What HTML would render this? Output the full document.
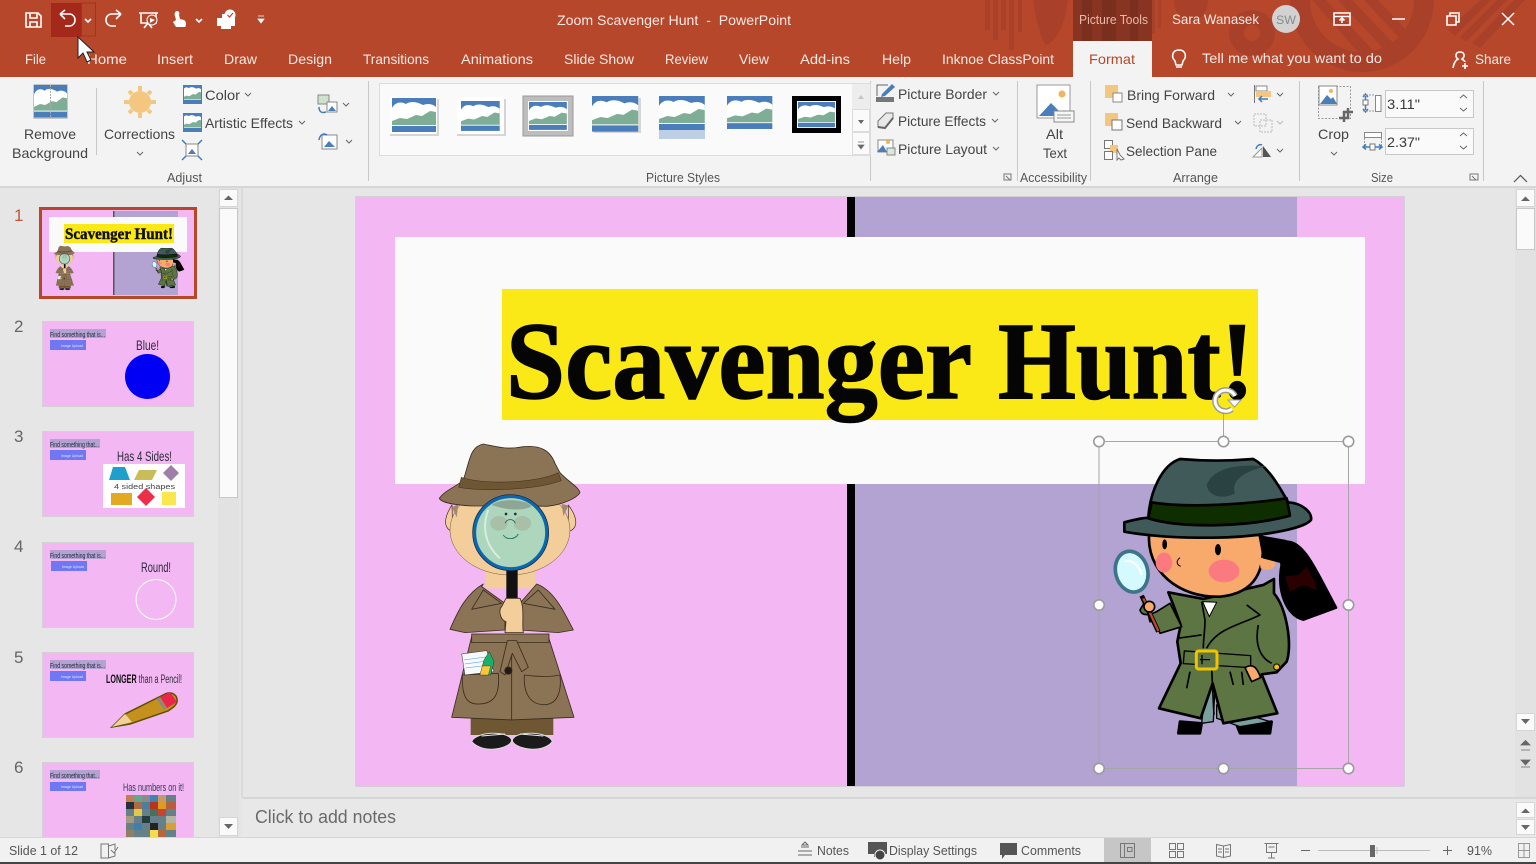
<!DOCTYPE html>
<html><head><meta charset="utf-8"><title>Zoom Scavenger Hunt - PowerPoint</title>
<style>
html,body{margin:0;padding:0;background:#e6e6e6;overflow:hidden}
svg{display:block}
text{font-family:"Liberation Sans",sans-serif;font-size:14px;fill:#444}
.w{fill:#f6e9e4}
.s{font-size:12.5px;fill:#555}
.n{font-size:17px;fill:#666}
.st{font-size:12.5px;fill:#555}
.c{font-size:7.5px;fill:#2a2a3a}
.ic{fill:none;stroke:#fff;stroke-width:1.6}
.chev{fill:none;stroke:#666;stroke-width:1}
.up{font-size:4px;fill:#dfe3ff}
.hd{font-size:14px;fill:#2c2c3a}
</style></head><body>
<svg width="1536" height="864" viewBox="0 0 1536 864" xmlns="http://www.w3.org/2000/svg">
<defs>
<g id="pic"><rect width="44" height="34" fill="#fff"/><rect width="44" height="13" fill="#4a7ebb"/><path d="M0,22V10C4,3 10,4 14,6C20,2 27,5 31,7C36,5 41,6 44,9V22Z" fill="#fff"/><path d="M0,27V23L8,20L15,21L24,17L30,18L38,13L44,14V27Z" fill="#7fae97"/><rect y="28" width="44" height="6" fill="#4a7ebb"/></g>
<g id="chevd"><path class="chev" d="M0,0L3,3L6,0"/></g>
<g id="handle"><circle r="5.2" fill="#fff" stroke="#9a9a9a" stroke-width="1.6"/></g>
<g id="det" stroke="#3a2c1d" stroke-width="2.5" stroke-linejoin="round">
<path d="M152,865H400V915H152Z" fill="#6f5733" stroke="none"/>
<path d="M155,935C165,905 265,900 275,930C275,955 190,975 155,935Z" fill="#1b1b1b" stroke="#ddd" stroke-width="3"/>
<path d="M397,935C390,905 285,900 277,930C277,955 365,975 397,935Z" fill="#1b1b1b" stroke="#ddd" stroke-width="3"/>
<path d="M185,918L255,912M300,912L370,918" stroke="#eee" stroke-width="3" fill="none"/>
<path d="M155,620L95,862L275,870L462,862L385,620Z" fill="#8b7355"/>
<path d="M275,660V870" fill="none"/>
<path d="M127,735C125,800 140,825 180,822C225,820 240,790 235,730Z" fill="#8b7355"/>
<path d="M313,735C310,790 330,825 375,824C415,822 425,780 420,735C390,742 345,740 313,735Z" fill="#8b7355"/>
<path d="M198,425H345V475H198Z" fill="#f3ce9b" stroke="none"/>
<path d="M190,462C140,490 115,540 90,598L135,608L255,600V520L185,470ZM350,462C400,480 430,540 460,600L415,608L300,600V520Z" fill="#8b7355"/>
<path d="M155,538L245,520L190,480ZM405,538L310,520L355,480Z" fill="#8b7355"/>
<rect x="155" y="612" width="232" height="26" fill="#8b7355"/>
<path d="M262,632L290,632L325,712L305,725L277,670L255,735L240,725Z" fill="#8b7355"/>
<circle cx="265" cy="722" r="11" fill="#1b1b1b"/>
<path d="M125,672L200,662L222,725L135,735Z" fill="#f6f9fd" stroke-width="1.5"/>
<path d="M132,690L205,680M135,702L208,692M137,714L212,705" stroke="#6fa8dc" stroke-width="2"/>
<path d="M192,690L208,665L222,695L212,735H180Z" fill="#17b26a" stroke-width="1.5"/>
<path d="M187,708H212L205,735H180Z" fill="#f6c83a" stroke-width="1"/>
<path d="M96,225C70,265 70,295 98,305ZM445,225C475,265 475,295 445,305Z" fill="#f3ce9b" stroke-width="2"/>
<ellipse cx="270" cy="300" rx="180" ry="135" fill="#f3ce9b" stroke="#6e5634" stroke-width="1.5"/>
<path d="M96,232L115,222L110,262ZM446,226L425,222L430,258Z" fill="#a08a67" stroke="none"/>
<path d="M58,205C75,180 110,170 130,150C150,90 150,50 190,42C230,50 260,60 310,50C360,45 390,60 405,100L420,128C445,155 475,170 480,188C470,205 425,225 380,229C300,226 220,228 155,228C110,225 65,220 58,205Z" fill="#8b7355"/>
<path d="M124,142C190,165 350,160 415,128L424,152C350,180 190,186 116,172Z" fill="#6e5634" stroke-width="1.500"/>
<rect x="259" y="415" width="34" height="90" fill="#111" stroke="none"/>
<circle cx="272" cy="308" r="109" fill="#aed6bc" stroke="#0b68ae" stroke-width="11"/>
<circle cx="272" cy="308" r="114" fill="none" stroke="#1a2433" stroke-width="2"/>
<path d="M215,225C270,245 320,240 335,228C310,205 240,205 215,225Z" fill="#8ea794" stroke="none"/>
<path d="M205,240C185,290 195,345 240,385" fill="none" stroke="#d5ede3" stroke-width="6"/>
<ellipse cx="237" cy="280" rx="26" ry="22" fill="#a9bfa7" stroke="none"/><ellipse cx="307" cy="280" rx="26" ry="22" fill="#a9bfa7" stroke="none"/>
<path d="M250,315C258,330 285,330 295,312M255,280C262,265 280,265 286,280" fill="none" stroke="#1f6a5a"/>
<circle cx="258" cy="252" r="4" fill="#1f3038" stroke="none"/><circle cx="286" cy="252" r="4" fill="#1f3038" stroke="none"/>
<path d="M258,505L300,505C315,535 305,580 310,608H255L258,575C240,570 235,540 245,530Z" fill="#f3ce9b"/>
</g>
<g id="girl" stroke="#000" stroke-width="8" stroke-linejoin="round">
<path d="M270,1010L265,1045H330L335,1015ZM440,1020L450,1045H540L545,1010Z" fill="#000"/>
<path d="M345,920L335,1015L370,1010L375,900ZM380,1000L450,1025L540,1010L380,960Z" fill="#7ba0a0" stroke-width="4"/>
<path d="M590,470C640,470 670,540 738,668L640,704C590,690 560,620 575,540C570,510 575,480 590,470Z" fill="#000"/>
<path d="M585,575L625,570L650,545L675,590L680,615L640,600L600,620Z" fill="#2a0000" stroke="none"/>
<path d="M235,622L340,642L520,600L552,582L552,625C590,670 608,780 590,830L560,862L515,868L562,985L400,1015L368,895L332,1000L207,970L272,835L262,770L272,720L250,660Z" fill="#5c7543"/>
<path d="M345,705L335,650M345,705C345,740 340,760 340,790M350,790C380,730 450,720 510,690L470,660M262,760L335,750M365,850L372,990M505,720C495,770 505,815 545,835M300,860L290,910M420,860L430,900M455,860L460,900" fill="none" stroke-width="5"/>
<path d="M338,650L380,652L358,695Z" fill="#fff" stroke-width="3"/>
<path d="M283,798L482,812V848L280,836Z" fill="#5c7543" stroke-width="4"/>
<rect x="319" y="798" width="62" height="54" rx="7" fill="#5c7543" stroke="#f3c300" stroke-width="9"/>
<path d="M336,810V838M330,824H360" stroke-width="4" fill="none"/>
<path d="M465,848C495,830 505,860 512,878L485,890Z" fill="#f8a96c" stroke-width="5"/>
<circle cx="560" cy="846" r="9" fill="#f3c300" stroke-width="3"/>
<path d="M178,440C165,560 270,640 390,635C500,625 530,550 515,450Z" fill="#f8a96c"/>
<path d="M508,525C525,505 560,515 555,540C545,560 525,555 512,550Z" fill="#f8a96c" stroke="none"/>
<path d="M505,450L590,465L575,535L518,520Z" fill="#000" stroke="none"/>
<ellipse cx="402" cy="558" rx="46" ry="34" fill="#fb7a80" stroke="none"/>
<ellipse cx="222" cy="533" rx="25" ry="30" fill="#fb7a80" stroke="none"/>
<ellipse cx="224" cy="478" rx="7" ry="15" fill="#000" stroke="none"/><ellipse cx="384" cy="494" rx="9" ry="17" fill="#000" stroke="none"/>
<path d="M270,518C255,530 262,540 272,544" fill="none" stroke-width="3"/>
<path d="M103,412C130,405 150,400 175,398C180,320 215,240 270,222C340,228 420,228 490,222C540,250 570,310 595,352C640,355 668,385 663,405C640,435 480,460 350,458C230,460 130,445 103,440Z" fill="#3f5a58"/>
<path d="M185,352C290,370 470,358 590,340L600,392C480,425 280,432 175,400Z" fill="#0f2e00"/>
<path d="M350,300C370,250 440,235 530,245C470,255 420,285 435,325C400,345 355,335 350,300Z" fill="#2b4243" stroke="none"/>
<path d="M165,650L150,675C155,695 180,690 200,680L240,655L275,725L210,745L195,710L180,710Z" fill="#5c7543" stroke-width="5"/>
<path d="M155,632L205,740" stroke="#000" stroke-width="14"/><path d="M160,640L205,738" stroke="#b94a2c" stroke-width="7"/>
<circle cx="178" cy="665" r="16" fill="#f8a96c" stroke-width="5"/>
<ellipse cx="125" cy="560" rx="48" ry="62" transform="rotate(-15 125 560)" fill="#d4faff" stroke="#3d7488" stroke-width="11"/>
<path d="M105,530C125,520 150,545 155,570" fill="none" stroke="#fff" stroke-width="6"/>
</g>
<clipPath id="t"><rect x="42" y="762" width="152" height="75"/></clipPath>
<clipPath id="tb"><rect width="1536" height="77"/></clipPath>
</defs>

<!-- base -->
<rect width="1536" height="864" fill="#e6e6e6"/>
<!-- title bar -->
<rect width="1536" height="77" fill="#b7472a"/>
<g fill="#a9412a" clip-path="url(#tb)">
<rect x="985" y="0" width="5" height="30"/><rect x="993" y="0" width="5" height="40"/><rect x="1001" y="0" width="5" height="30"/><rect x="1009" y="0" width="5" height="50"/><rect x="1018" y="0" width="4" height="32"/>
<path d="M1033,0H1068C1064,35 1050,45 1045,45C1038,30 1035,15 1033,0Z"/>
<rect x="1152" y="0" width="3" height="34"/><rect x="1158" y="0" width="3" height="28"/>
<path d="M1174,0H1208A16,20 0 0,1 1174,0Z"/>
<path fill-rule="evenodd" d="M1252,10A23,23 0 1,1 1251.900,10ZM1252,25A8,8 0 1,0 1252.100,25Z"/>
<circle cx="1362" cy="0" r="62" fill="none" stroke="#a9412a" stroke-width="20"/>
<path d="M1312,0H1326L1384,62L1374,70ZM1338,0H1352L1400,50L1392,58ZM1364,0H1378L1412,36L1405,44Z"/>
<path d="M1448,30L1480,0H1491L1455,36ZM1460,37L1497,0H1507L1466,42ZM1472,43L1514,0H1525L1480,48Z"/>
</g>
<path d="M1073,0H1152V41H1073Z" fill="#873522"/>
<g fill="#7a2e1d"><rect x="1082" y="0" width="10" height="41"/><rect x="1102" y="0" width="14" height="41"/><rect x="1130" y="0" width="8" height="41"/></g>
<rect x="1073" y="41" width="79" height="36" fill="#f3f3f3"/>
<!-- QAT -->
<g>
<path class="ic" d="M26,13H38L41,16V27H26ZM30,13V18H37V13M30,27V22H37V27" stroke-width="1.5"/>
<rect x="51" y="3" width="30" height="34" fill="#a5291b"/><rect x="81.500" y="3" width="14" height="33" fill="none" stroke="#a0351f"/>
<path class="ic" d="M60,14L65,10M60,14L65,19M60,14H69C77,14 77,26 69,26H65" stroke-width="2"/>
<path class="ic" d="M85,19L88,22L91,19" stroke-width="1"/>
<path class="ic" d="M121,14L116,10M121,14L116,19M121,14H112C104,14 104,26 112,26H116" stroke-width="2"/>
<path class="ic" d="M139,13H158M141,13V23H156V13M148,23L144,28M148,23L152,28" stroke-width="1.2"/><circle cx="152" cy="20" r="5" fill="#b7472a" stroke="#fff"/><path d="M150,18L155,20L150,23Z" fill="#fff"/>
<path d="M177,11C175,11 174,14 175,16L176,20L173,22L176,27H185C187,25 186,21 184,20L180,19L179,15C180,13 179,11 177,11Z" fill="#fff"/>
<path class="ic" d="M196,19L199,22L202,19" stroke-width="1"/>
<path d="M217,18H235V26H231V29H221V26H217Z" fill="#fff"/><rect x="222" y="14" width="9" height="4" fill="#fff"/><circle cx="230" cy="15" r="5.500" fill="#fff"/><path d="M227.500,15L229.500,17L233,13" stroke="#b7472a" stroke-width="1.2" fill="none"/>
<path d="M258,16H264M258,19H264L261,23Z" fill="#fff" stroke="#fff" stroke-width=".8"/>
</g>
<text class="w" x="557" y="25" textLength="234" lengthAdjust="spacingAndGlyphs">Zoom Scavenger Hunt&#160;&#160;-&#160;&#160;PowerPoint</text>
<text x="1079" y="24" textLength="69" lengthAdjust="spacingAndGlyphs" style="font-size:12.500px;fill:#e8b9a8">Picture Tools</text>
<text class="w" x="1172" y="24" textLength="87" lengthAdjust="spacingAndGlyphs">Sara Wanasek</text>
<circle cx="1286" cy="19" r="14" fill="#d2d2d2"/>
<text x="1276" y="24" textLength="20" lengthAdjust="spacingAndGlyphs" style="font-size:12px;fill:#8a8a8a">SW</text>
<path class="ic" d="M1334,13H1350V25H1334Z M1334,16.500H1350 M1342,23V18M1339.500,20.500L1342,18L1344.500,20.500" stroke-width="1.3"/>
<path d="M1392,19H1405" stroke="#fff" stroke-width="1.500"/>
<path class="ic" d="M1447,16H1456V25H1447ZM1450,16V13H1459V22H1456" stroke-width="1.300"/>
<path d="M1502,13L1514,25M1514,13L1502,25" stroke="#fff" stroke-width="1.500"/>
<!-- tabs -->
<g class="tabs">
<text class="w" x="25" y="64" textLength="21" lengthAdjust="spacingAndGlyphs">File</text>
<text class="w" x="87" y="64" textLength="40" lengthAdjust="spacingAndGlyphs">Home</text>
<text class="w" x="157" y="64" textLength="36" lengthAdjust="spacingAndGlyphs">Insert</text>
<text class="w" x="224" y="64" textLength="33" lengthAdjust="spacingAndGlyphs">Draw</text>
<text class="w" x="288" y="64" textLength="44" lengthAdjust="spacingAndGlyphs">Design</text>
<text class="w" x="363" y="64" textLength="66" lengthAdjust="spacingAndGlyphs">Transitions</text>
<text class="w" x="461" y="64" textLength="72" lengthAdjust="spacingAndGlyphs">Animations</text>
<text class="w" x="564" y="64" textLength="70" lengthAdjust="spacingAndGlyphs">Slide Show</text>
<text class="w" x="665" y="64" textLength="43" lengthAdjust="spacingAndGlyphs">Review</text>
<text class="w" x="739" y="64" textLength="30" lengthAdjust="spacingAndGlyphs">View</text>
<text class="w" x="800" y="64" textLength="50" lengthAdjust="spacingAndGlyphs">Add-ins</text>
<text class="w" x="882" y="64" textLength="29" lengthAdjust="spacingAndGlyphs">Help</text>
<text class="w" x="942" y="64" textLength="112" lengthAdjust="spacingAndGlyphs">Inknoe ClassPoint</text>
<text x="1089" y="64" textLength="46" lengthAdjust="spacingAndGlyphs" style="fill:#b7472a">Format</text>
<text class="w" x="1202" y="63" textLength="180" lengthAdjust="spacingAndGlyphs">Tell me what you want to do</text>
<text class="w" x="1475" y="64" textLength="36" lengthAdjust="spacingAndGlyphs">Share</text>
</g>
<path class="ic" d="M1175,61C1171,57 1172,50 1179,50C1186,50 1187,57 1183,61L1182,65H1176ZM1176,67H1182" stroke-width="1.200"/>
<path class="ic" d="M1453,68C1454,62 1456,60 1458,59C1455,57 1455,52 1460,52C1465,52 1465,57 1462,59C1463,60 1465,61 1465,62M1462,66H1468M1465,63V69" stroke-width="1.100"/>

<!-- ribbon -->
<rect y="77" width="1536" height="109" fill="#f3f3f3"/>
<rect y="186" width="1536" height="2" fill="#d6d6d6"/>
<g stroke="#c8c8c8"><path d="M96.500,88V155M368.500,81V181M1017.500,81V181M1090.500,81V181M1299.500,81V181M1483.500,81V181M870.500,81V181" fill="none"/></g>
<!-- remove bg -->
<g transform="translate(34,85)"><rect width="33" height="33" fill="#fff" stroke="#999"/><use href="#pic" transform="scale(.75,.95)"/><path d="M16.500,0V33" stroke="#aaa" stroke-dasharray="2 1"/></g>
<text x="24" y="139" textLength="52" lengthAdjust="spacingAndGlyphs">Remove</text>
<text x="12" y="158" textLength="76" lengthAdjust="spacingAndGlyphs">Background</text>
<!-- corrections -->
<circle cx="140" cy="102" r="11" fill="#f3c77f"/>
<g stroke="#f3c77f" stroke-width="4"><path d="M140,86V91M140,113V118M124,102H129M151,102H156M129,91L132,94M148,110L151,113M151,91L148,94M132,110L129,113"/></g>
<text x="104" y="139" textLength="71" lengthAdjust="spacingAndGlyphs">Corrections</text>
<use href="#chevd" x="137" y="152"/>
<use href="#pic" transform="translate(183,85) scale(.42,.53)"/><rect x="183.500" y="85.500" width="18" height="18" fill="none" stroke="#4a7ebb"/>
<text x="205" y="100" textLength="35" lengthAdjust="spacingAndGlyphs">Color</text><use href="#chevd" x="245" y="93"/>
<use href="#pic" transform="translate(183,113) scale(.42,.53)"/><rect x="183.500" y="113.500" width="18" height="18" fill="none" stroke="#777"/>
<text x="205" y="128" textLength="88" lengthAdjust="spacingAndGlyphs">Artistic Effects</text><use href="#chevd" x="299" y="121"/>
<g transform="translate(182,140)"><rect x="4" y="4" width="12" height="12" fill="#fff" stroke="#888"/><path d="M6,14L10,9L14,14Z" fill="#4a7ebb"/><path d="M0,0L4,4M20,0L16,4M0,20L4,16M20,20L16,16" stroke="#3d7cc0" stroke-width="1.500"/></g>
<g transform="translate(318,95)"><rect width="11" height="9" fill="#cfe0cf" stroke="#888"/><rect x="9" y="7" width="10" height="10" fill="#fff" stroke="#888"/><path d="M10,16L14,11L18,16Z" fill="#4a7ebb"/><path d="M1,12C1,18 5,18 8,17" fill="none" stroke="#3d7cc0" stroke-width="1.500"/></g>
<use href="#chevd" x="343" y="103"/>
<g transform="translate(318,132)"><rect x="4" y="3" width="15" height="14" fill="#fff" stroke="#888"/><path d="M6,15L11,9L17,15Z" fill="#4a7ebb"/><path d="M1,8C2,2 6,1 9,3" fill="none" stroke="#3d7cc0" stroke-width="1.500"/></g>
<use href="#chevd" x="346" y="140"/>
<text class="s" x="167" y="182" textLength="35" lengthAdjust="spacingAndGlyphs">Adjust</text>

<!-- gallery -->
<rect x="379.500" y="83.500" width="491" height="72" fill="#fafafa" stroke="#dcdcdc"/>
<g fill="#000" opacity=".14"><rect x="390" y="99" width="49" height="37"/><rect x="457" y="99" width="49" height="37"/><rect x="594" y="98" width="47" height="35"/></g>
<rect x="390" y="97" width="47" height="37" fill="#fff"/><use href="#pic" transform="translate(392,98)"/>
<rect x="457" y="97" width="47" height="37" fill="#fff"/><use href="#pic" transform="translate(461,101) scale(.88)"/>
<rect x="523" y="96" width="50" height="40" fill="#bdbdbd" stroke="#999"/><rect x="528" y="101" width="40" height="30" fill="#fff"/><use href="#pic" transform="translate(529,102) scale(.86,.82)"/>
<use href="#pic" transform="translate(592,96) scale(1.05)"/>
<use href="#pic" transform="translate(659,96) scale(1.04,1)"/><rect x="659" y="130" width="46" height="9" fill="#4a7ebb" opacity=".35"/>
<use href="#pic" transform="translate(727,96) scale(1.03,.97)"/>
<rect x="792" y="96" width="49" height="37" fill="#000"/><rect x="797" y="101" width="39" height="27" fill="#fff"/><use href="#pic" transform="translate(798,102) scale(.84,.74)"/>
<rect x="852" y="84" width="18" height="25" fill="#ededed"/><rect x="852.500" y="109.500" width="17" height="22" fill="#fafafa" stroke="#dcdcdc"/><rect x="852.500" y="132.500" width="17" height="22" fill="#fafafa" stroke="#dcdcdc"/>
<path d="M858,99L861,95L864,99Z" fill="#c6c6c6"/><path d="M858,120H864L861,124Z" fill="#666"/><path d="M858,142H864M858,145H864L861,149Z" stroke="#777" fill="#666" stroke-width=".8"/>
<text class="s" x="646" y="182" textLength="74" lengthAdjust="spacingAndGlyphs">Picture Styles</text>
<g fill="none" stroke="#777"><path d="M1004,180V174H1011V180ZM1006,176L1010,180"/><path d="M1470,180V174H1478V180ZM1472,176L1476,180"/></g>
<!-- picture border etc -->
<g><rect x="876" y="97" width="18" height="5" fill="#777"/><path d="M877,96V85H888" fill="none" stroke="#666"/><path d="M882,94L892,84L895,87L885,96L881,97Z" fill="#4a7ebb"/></g>
<text x="898" y="99" textLength="89" lengthAdjust="spacingAndGlyphs">Picture Border</text><use href="#chevd" x="993" y="92"/>
<path d="M878,121L886,113H893V118L885,128L878,127Z" fill="#e8e8e8" stroke="#777"/><path d="M878,127L885,128L893,118" stroke="#666" stroke-width="2" fill="none"/>
<text x="898" y="126" textLength="88" lengthAdjust="spacingAndGlyphs">Picture Effects</text><use href="#chevd" x="992" y="119"/>
<g transform="translate(876,138)"><rect x="2" y="2" width="15" height="12" fill="#fff" stroke="#888"/><path d="M1,14L7,7L11,14Z" fill="#4a7ebb"/><rect x="11" y="10" width="8" height="7" fill="#d9e7dc" stroke="#888"/><circle cx="12" cy="4" r="2" fill="#f2b45c"/></g>
<text x="898" y="154" textLength="89" lengthAdjust="spacingAndGlyphs">Picture Layout</text><use href="#chevd" x="993" y="147"/>
<!-- alt -->
<g transform="translate(1037,85)"><rect width="33" height="33" fill="#fff" stroke="#999"/><path d="M2,31L14,18L24,28L27,25L32,31Z" fill="#4a7ebb"/><circle cx="25" cy="9" r="3.500" fill="#f2b45c"/><rect x="17" y="26" width="20" height="11" fill="#f7f7f7" stroke="#888"/><path d="M20,30H34M20,33H34" stroke="#999"/></g>
<text x="1046" y="139" textLength="17" lengthAdjust="spacingAndGlyphs">Alt</text>
<text x="1043" y="158" textLength="24" lengthAdjust="spacingAndGlyphs">Text</text>
<text class="s" x="1020" y="182" textLength="67" lengthAdjust="spacingAndGlyphs">Accessibility</text>
<!-- arrange -->
<rect x="1105" y="85" width="13" height="13" fill="#f3c77f"/><rect x="1113" y="93" width="9" height="9" fill="#fff" stroke="#888"/>
<text x="1127" y="100" textLength="88" lengthAdjust="spacingAndGlyphs">Bring Forward</text><use href="#chevd" x="1228" y="93"/>
<rect x="1105" y="113" width="13" height="13" fill="#f3c77f"/><rect x="1112" y="120" width="10" height="10" fill="#fff" stroke="#777"/>
<text x="1126" y="128" textLength="96" lengthAdjust="spacingAndGlyphs">Send Backward</text><use href="#chevd" x="1235" y="121"/>
<g transform="translate(1104,140)"><rect x=".5" y=".5" width="8" height="8" fill="#fff" stroke="#777"/><rect x="6" y="5" width="8" height="8" fill="#f3c77f"/><rect x=".5" y="11.500" width="8" height="8" fill="#fff" stroke="#777"/><path d="M13,9V20L15,18L17,20L20,19L16,15Z" fill="#fff" stroke="#777"/></g>
<text x="1126" y="156" textLength="91" lengthAdjust="spacingAndGlyphs">Selection Pane</text>
<g transform="translate(1254,85)"><path d="M.5,0V18" stroke="#777"/><rect x="2" y="1" width="11" height="5" fill="#fff" stroke="#888"/><rect x="2" y="6" width="15" height="6" fill="#f3c77f"/><path d="M14,14H5M8,11L5,14L8,17" stroke="#3d7cc0" stroke-width="1.500" fill="none"/></g>
<use href="#chevd" x="1277" y="93"/>
<g transform="translate(1253,113)" stroke="#bbb" fill="none"><rect x="1" y="1" width="12" height="12" stroke-dasharray="2 1"/><rect x="7" y="7" width="12" height="12" stroke-dasharray="2 1"/></g>
<use href="#chevd" x="1277" y="121" opacity=".4"/>
<g transform="translate(1252,142)"><path d="M1,15L10,6V15Z" fill="#fff" stroke="#999"/><path d="M11,4L19,15H11Z" fill="#555"/><path d="M4,7C5,3 8,2 10,3" stroke="#3d7cc0" fill="none" stroke-width="1.500"/></g>
<use href="#chevd" x="1277" y="149"/>
<text class="s" x="1173" y="182" textLength="45" lengthAdjust="spacingAndGlyphs">Arrange</text>
<!-- size -->
<rect x="1318.500" y="86.500" width="32" height="32" fill="none" stroke="#999" stroke-dasharray="2 1.500"/>
<rect x="1319" y="86" width="18" height="19" fill="#fff" stroke="#888"/><path d="M1320,104L1327,95L1331,99L1333,97L1337,104Z" fill="#4a7ebb"/><circle cx="1331" cy="91" r="2" fill="#f2b45c"/>
<path d="M1348,108V118H1339M1344,122V112H1353" fill="none" stroke="#666" stroke-width="2.500"/>
<text x="1318" y="139" textLength="31" lengthAdjust="spacingAndGlyphs">Crop</text><use href="#chevd" x="1331" y="152"/>
<g><rect x="1375.500" y="95.500" width="5.500" height="16" fill="#fff" stroke="#888"/><path d="M1365.500,96V110" stroke="#3d7cc0" stroke-width="1.500"/><path d="M1363,97L1365.500,94L1368,97M1363,109L1365.500,112L1368,109" fill="none" stroke="#3d7cc0" stroke-width="1.500"/><rect x="1363" y="100" width="5" height="5" fill="#fff" stroke="#777"/><path d="M1363,95H1375M1363,111H1375" stroke="#999" stroke-dasharray="2 1"/></g>
<g><rect x="1364.500" y="132.500" width="17" height="5" fill="#fff" stroke="#888"/><path d="M1364.500,138V146M1381.500,138V146" stroke="#999" stroke-dasharray="2 1"/><path d="M1364,147H1381" stroke="#3d7cc0" stroke-width="1.500"/><path d="M1366,144.500L1363,147L1366,149.500M1379,144.500L1382,147L1379,149.500" fill="none" stroke="#3d7cc0" stroke-width="1.500"/><rect x="1370" y="144" width="5" height="6" fill="#fff" stroke="#777"/></g>
<rect x="1385.500" y="90.500" width="88" height="27" fill="#fafafa" stroke="#c8c8c8"/>
<rect x="1385.500" y="128.500" width="88" height="26" fill="#fafafa" stroke="#c8c8c8"/>
<text x="1387" y="109" textLength="33" lengthAdjust="spacingAndGlyphs" style="fill:#3a3a3a">3.11"</text>
<text x="1387" y="147" textLength="33" lengthAdjust="spacingAndGlyphs" style="fill:#3a3a3a">2.37"</text>
<path class="chev" d="M1460,98L1463.500,95L1467,98M1460,108L1463.500,111L1467,108M1460,136L1463.500,133L1467,136M1460,146L1463.500,149L1467,146"/>
<text class="s" x="1371" y="182" textLength="22" lengthAdjust="spacingAndGlyphs">Size</text>
<path d="M1514,182L1520.500,175.500L1527,182" fill="none" stroke="#555" stroke-width="1.200"/>

<!-- left pane -->
<rect x="0" y="188" width="243" height="650" fill="#e6e6e6"/>
<rect x="241" y="188" width="2" height="610" fill="#dadada"/>
<rect x="218" y="188" width="21" height="650" fill="#e2e2e2"/>
<rect x="219.500" y="189.500" width="18" height="17" fill="#fafafa" stroke="#d6d6d6"/>
<rect x="219.500" y="208.500" width="18" height="289" fill="#fafafa" stroke="#c8c8c8"/>
<rect x="219.500" y="817.500" width="18" height="18" fill="#fafafa" stroke="#d6d6d6"/>
<path d="M224,200H233L228.500,195.500Z" fill="#666"/><path d="M224,824H233L228.500,829Z" fill="#666"/>

<!-- thumb numbers -->
<text class="n" x="14" y="221" style="fill:#c0583a">1</text>
<text class="n" x="14" y="332">2</text>
<text class="n" x="14" y="442">3</text>
<text class="n" x="14" y="552">4</text>
<text class="n" x="14" y="663">5</text>
<text class="n" x="14" y="773">6</text>
<!-- thumb 1 -->
<rect x="39" y="207" width="158" height="92" fill="#b7472a"/>
<rect x="42" y="210" width="152" height="86" fill="#f3b8f3"/>
<rect x="114" y="211" width="64" height="84" fill="#b2a3d3"/>
<rect x="113" y="211" width="1.500" height="84" fill="#555"/>
<rect x="49" y="217" width="138" height="35" fill="#fafafa"/>
<rect x="64" y="224" width="110" height="19" fill="#fbe817"/>
<text x="65" y="239" textLength="108" lengthAdjust="spacingAndGlyphs" style="font-family:'Liberation Serif',serif;font-weight:bold;font-size:16px;fill:#111;stroke:#111;stroke-width:.4">Scavenger Hunt!</text>
<use href="#det" transform="translate(51.400,243.900) scale(.0483)"/>
<use href="#girl" transform="translate(148.400,237.400) scale(.0483)"/>
<!-- thumb 2 -->
<rect x="42.500" y="321.500" width="151" height="85" fill="#f3b8f3" stroke="#d4d0d4"/>
<rect x="50" y="329" width="56" height="9" fill="#b2a3d3"/><text class="c" x="50" y="337" textLength="55" lengthAdjust="spacingAndGlyphs">Find something that is...</text>
<rect x="50" y="340" width="36" height="10" fill="#6f78f2"/><text class="up" x="61" y="347" textLength="22" lengthAdjust="spacingAndGlyphs">Image Upload</text>
<text class="hd" x="136" y="350" textLength="23" lengthAdjust="spacingAndGlyphs">Blue!</text>
<circle cx="147.500" cy="376.500" r="22.500" fill="#0000f5"/>
<!-- thumb 3 -->
<rect x="42.500" y="431.500" width="151" height="85" fill="#f3b8f3" stroke="#d4d0d4"/>
<rect x="50" y="439" width="50" height="9" fill="#b2a3d3"/><text class="c" x="50" y="447" textLength="49" lengthAdjust="spacingAndGlyphs">Find something that...</text>
<rect x="50" y="450" width="36" height="10" fill="#6f78f2"/><text class="up" x="61" y="457" textLength="22" lengthAdjust="spacingAndGlyphs">Image Upload</text>
<text class="hd" x="117" y="461" textLength="55" lengthAdjust="spacingAndGlyphs">Has 4 Sides!</text>
<rect x="103" y="464" width="82" height="44" fill="#fff"/>
<path d="M113,467H125L130,480H109Z" fill="#1fa0cc"/><path d="M139,470H157L152,480H134Z" fill="#c8bd57"/><path d="M171,465L179,473L171,481L163,473Z" fill="#9f7ea8"/>
<text x="114" y="489" textLength="61" lengthAdjust="spacingAndGlyphs" style="font-size:7px;fill:#444">4 sided shapes</text>
<rect x="111" y="493" width="21" height="12" fill="#e2aa22"/><path d="M146,488L155,497L146,506L137,497Z" fill="#ee2f4a"/><rect x="162" y="492" width="14" height="13" fill="#fbe64e"/>
<!-- thumb 4 -->
<rect x="42.500" y="542.500" width="151" height="85" fill="#f3b8f3" stroke="#d4d0d4"/>
<rect x="50" y="550" width="56" height="9" fill="#b2a3d3"/><text class="c" x="50" y="558" textLength="55" lengthAdjust="spacingAndGlyphs">Find something that is...</text>
<rect x="51" y="561" width="36" height="10" fill="#6f78f2"/><text class="up" x="62" y="568" textLength="22" lengthAdjust="spacingAndGlyphs">Image Upload</text>
<text class="hd" x="141" y="572" textLength="30" lengthAdjust="spacingAndGlyphs">Round!</text>
<circle cx="156" cy="599.500" r="20" fill="none" stroke="#fff" stroke-width="1"/>
<!-- thumb 5 -->
<rect x="42.500" y="652.500" width="151" height="85" fill="#f3b8f3" stroke="#d4d0d4"/>
<rect x="50" y="660" width="56" height="9" fill="#b2a3d3"/><text class="c" x="50" y="668" textLength="55" lengthAdjust="spacingAndGlyphs">Find something that is...</text>
<rect x="50" y="671" width="36" height="10" fill="#6f78f2"/><text class="up" x="61" y="678" textLength="22" lengthAdjust="spacingAndGlyphs">Image Upload</text>
<text x="106" y="683" textLength="76" lengthAdjust="spacingAndGlyphs" style="font-size:11.500px;fill:#2c2c3a"><tspan font-weight="bold" fill="#111">LONGER</tspan> than a Pencil!</text>
<path d="M112,727L125,714L165,694C172,691 178,695 177,702C176,706 172,708 168,711L130,724Z" fill="#c6901c" stroke="#5c5000" stroke-width="1.500"/>
<path d="M112,727L125,714L132,722Z" fill="#f0d19b"/><path d="M160,697L167,708L177,702L170,692Z" fill="#e8254a"/><path d="M158,698L165,709" stroke="#888" stroke-width="3"/>
<!-- thumb 6 -->
<g clip-path="url(#t)">
<rect x="42.500" y="762.500" width="151" height="85" fill="#f3b8f3" stroke="#d4d0d4"/>
<rect x="50" y="770" width="50" height="9" fill="#b2a3d3"/><text class="c" x="50" y="778" textLength="49" lengthAdjust="spacingAndGlyphs">Find something that...</text>
<rect x="50" y="782" width="36" height="9" fill="#6f78f2"/><text class="up" x="61" y="788" textLength="22" lengthAdjust="spacingAndGlyphs">Image Upload</text>
<text x="123" y="791" textLength="61" lengthAdjust="spacingAndGlyphs" style="font-size:11px;fill:#2c3a55">Has numbers on it!</text>
<rect x="126" y="795" width="50" height="42" fill="#66808a"/>
<g><rect x="126" y="795" width="8" height="7" fill="#c67b52"/><rect x="134" y="795" width="8" height="7" fill="#62a88a"/><rect x="142" y="795" width="8" height="7" fill="#8a8a8a"/><rect x="150" y="795" width="8" height="7" fill="#3d83b5"/><rect x="158" y="795" width="8" height="7" fill="#c49a6b"/>
<rect x="126" y="802" width="8" height="7" fill="#25303a"/><rect x="134" y="802" width="8" height="7" fill="#b06a42"/><rect x="142" y="802" width="8" height="7" fill="#4d7f9c"/><rect x="150" y="802" width="8" height="7" fill="#b8321f"/><rect x="158" y="802" width="8" height="7" fill="#dd9c1f"/><rect x="166" y="802" width="10" height="7" fill="#b55f3c"/>
<rect x="134" y="809" width="8" height="7" fill="#e3c84b"/><rect x="150" y="809" width="8" height="7" fill="#48705c"/><rect x="158" y="809" width="8" height="7" fill="#c9432f"/>
<rect x="126" y="816" width="8" height="7" fill="#a39a80"/><rect x="142" y="816" width="8" height="7" fill="#263d3f"/><rect x="166" y="816" width="10" height="7" fill="#b4b4a0"/>
<rect x="134" y="823" width="8" height="7" fill="#3f7fb0"/><rect x="150" y="823" width="8" height="7" fill="#222"/><rect x="166" y="823" width="10" height="7" fill="#d9a02e"/>
<rect x="126" y="830" width="8" height="7" fill="#8d7f5f"/><rect x="150" y="830" width="8" height="7" fill="#f2dd4c"/><rect x="158" y="830" width="8" height="7" fill="#b8673b"/></g>
</g>

<!-- main slide -->
<rect x="355.500" y="196.500" width="1049" height="590" fill="#f3b8f3" stroke="#d4d0d4"/>
<rect x="855" y="197" width="442" height="589" fill="#b2a3d3"/>
<rect x="847" y="197" width="8" height="589" fill="#000"/>
<rect x="395" y="237" width="970" height="247" fill="#fafafa"/>
<rect x="502" y="289" width="756" height="131" fill="#fbe817"/>
<text x="506" y="398" textLength="466" lengthAdjust="spacingAndGlyphs" style="font-family:'Liberation Serif',serif;font-weight:bold;font-size:110px;fill:#050505;stroke:#050505;stroke-width:1.500">Scavenger</text>
<text x="998" y="398" textLength="256" lengthAdjust="spacingAndGlyphs" style="font-family:'Liberation Serif',serif;font-weight:bold;font-size:110px;fill:#050505;stroke:#050505;stroke-width:1.500">Hunt!</text>
<use href="#det" transform="translate(420,430) scale(.3333)"/>
<use href="#girl" transform="translate(1090,385) scale(.3333)"/>
<!-- selection -->
<path d="M1099,441.500H1348.500V768.500H1099ZM1223.500,441V412" fill="none" stroke="#a6a6a6" stroke-width="1"/>
<use href="#handle" x="1099" y="441.500"/><use href="#handle" x="1223.500" y="441.500"/><use href="#handle" x="1348.500" y="441.500"/>
<use href="#handle" x="1099" y="605"/><use href="#handle" x="1348.500" y="605"/>
<use href="#handle" x="1099" y="768.500"/><use href="#handle" x="1223.500" y="768.500"/><use href="#handle" x="1348.500" y="768.500"/>
<path d="M1235,396A10.500,10.500 0 1,0 1232,409" fill="none" stroke="#9b9b9b" stroke-width="6"/>
<path d="M1235,396A10.500,10.500 0 1,0 1232,409" fill="none" stroke="#fff" stroke-width="3"/>
<path d="M1228,400H1241L1234.500,407Z" fill="#fff" stroke="#9b9b9b"/>

<!-- right scrollbar -->
<rect x="1515" y="188" width="21" height="610" fill="#e2e2e2"/>
<rect x="1516.500" y="189.500" width="18" height="17" fill="#fafafa" stroke="#d6d6d6"/>
<rect x="1516.500" y="208.500" width="18" height="41" fill="#fafafa" stroke="#c8c8c8"/>
<rect x="1516.500" y="713.500" width="18" height="17" fill="#fafafa" stroke="#d6d6d6"/>
<path d="M1521,201H1530L1525.500,196.500Z" fill="#666"/><path d="M1521,719H1530L1525.500,724Z" fill="#666"/>
<path d="M1521,745H1530L1525.500,740.500ZM1521,750H1530M1521,760H1530L1525.500,765ZM1521,767H1530" fill="#666" stroke="#666" stroke-width=".8"/>

<!-- notes -->
<rect x="243" y="797" width="1293" height="2" fill="#d6d6d6"/>
<rect x="243" y="799" width="1293" height="39" fill="#e8e8e8"/>
<text x="255" y="823" textLength="141" lengthAdjust="spacingAndGlyphs" style="font-size:18px;fill:#6a6a6a">Click to add notes</text>
<rect x="1516.500" y="802.500" width="18" height="15" fill="#fafafa" stroke="#d6d6d6"/>
<rect x="1516.500" y="819.500" width="18" height="15" fill="#fafafa" stroke="#d6d6d6"/>
<path d="M1521,813H1530L1525.500,808.500Z" fill="#666"/><path d="M1521,825H1530L1525.500,830Z" fill="#666"/>

<!-- status -->
<rect y="838" width="1536" height="24" fill="#f1f1f1"/>
<rect y="837" width="1536" height="1" fill="#d6d6d6"/>
<rect y="862" width="1536" height="2" fill="#444"/>
<text class="st" x="9" y="855" textLength="69" lengthAdjust="spacingAndGlyphs">Slide 1 of 12</text>
<path d="M101,844H108.500V858H101ZM108.500,846L115,844V850M108.500,858L115,856V852M111,850L114,853L118,847" fill="none" stroke="#777"/>
<path d="M798,855H812M798,851H812M801,847H809M805,842L802,845H808Z" fill="none" stroke="#666"/>
<text class="st" x="817" y="855" textLength="32" lengthAdjust="spacingAndGlyphs">Notes</text>
<path d="M868,842H887V854H880V857H874V854H868Z" fill="#555"/><circle cx="880" cy="855" r="5" fill="#444" stroke="#f1f1f1"/>
<text class="st" x="889" y="855" textLength="88" lengthAdjust="spacingAndGlyphs">Display Settings</text>
<path d="M1000,843H1017V855H1005L1002,859V855H1000Z" fill="#555"/>
<text class="st" x="1021" y="855" textLength="60" lengthAdjust="spacingAndGlyphs">Comments</text>
<rect x="1104" y="838" width="47" height="24" fill="#c6c6c6"/>
<g fill="none" stroke="#777"><path d="M1120.500,843.500H1134.500V857.500H1120.500ZM1124.500,843.500V857.500M1127.500,847.500H1132V851.500H1127.500Z"/>
<path d="M1169.500,843.500H1175.500V849.500H1169.500ZM1177.500,843.500H1183.500V849.500H1177.500ZM1169.500,851.500H1175.500V857.500H1169.500ZM1177.500,851.500H1183.500V857.500H1177.500Z"/>
<path d="M1216.500,844.500L1223.500,846V857.500L1216.500,856ZM1230.500,844.500L1223.500,846V857.500L1230.500,856ZM1218,849H1222M1218,852H1222M1225,849H1229M1225,852H1229"/>
<path d="M1264.500,843.500H1278.500M1266.500,843.500V852.500H1276.500V843.500M1271.500,852.500V858M1268,858H1275M1268.500,847H1274.500"/></g>
<path d="M1301,850.500H1310M1443,850.500H1452M1447.500,846V855" stroke="#666" fill="none"/>
<path d="M1318,850.500H1430M1377,847V854" stroke="#bbb" fill="none"/>
<rect x="1370" y="845" width="5" height="12" fill="#666"/>
<text class="st" x="1467" y="855" textLength="25" lengthAdjust="spacingAndGlyphs">91%</text>
<path d="M1518.500,843.500H1529.500V857.500H1518.500ZM1518.500,850.500H1529.500M1524,843.500V857.500" fill="none" stroke="#999"/>

<!-- cursor -->
<path d="M78,37V58L83,53L87,62L91,60L87,52L94,52Z" fill="#fff" stroke="#222" stroke-width="1"/>
</svg>
</body></html>
